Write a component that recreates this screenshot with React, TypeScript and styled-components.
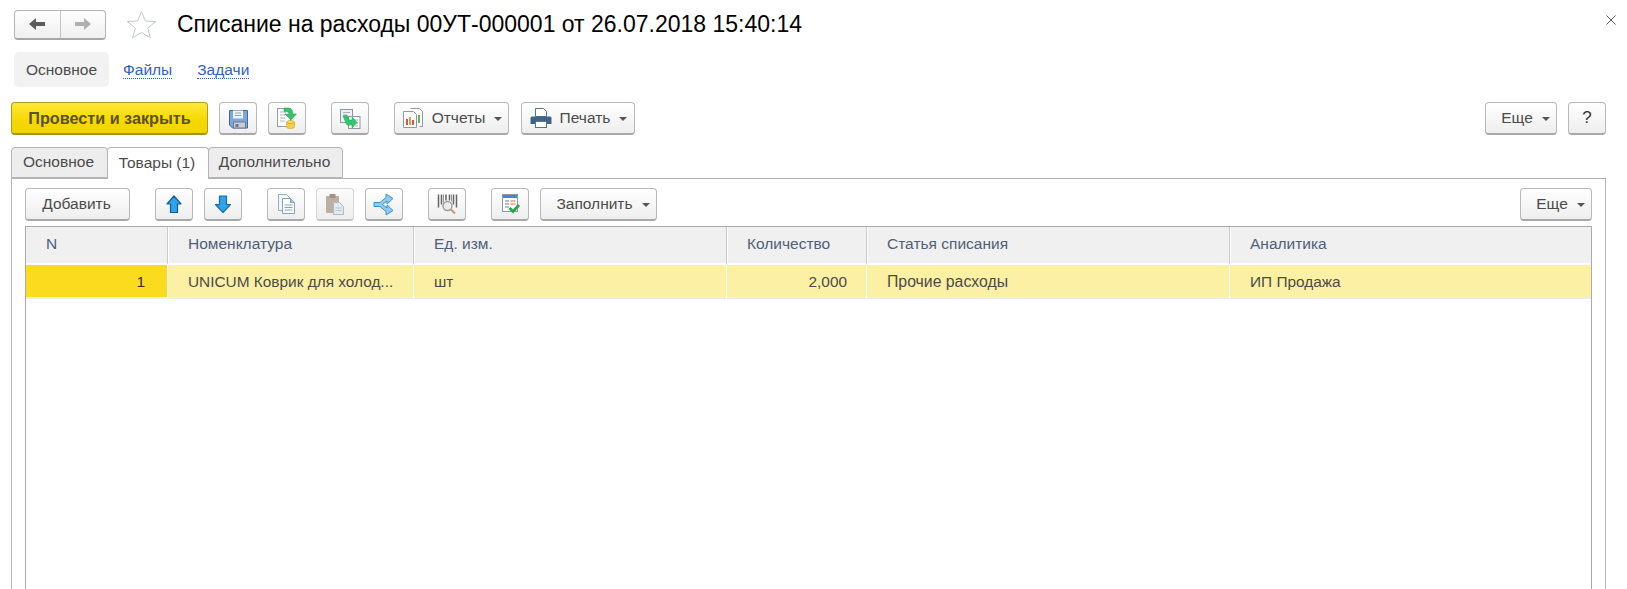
import React from 'react';
import styled, { createGlobalStyle } from 'styled-components';

const Global = createGlobalStyle`
  html, body { margin: 0; padding: 0; background: #fff; }
  body { font-family: "Liberation Sans", Arial, sans-serif; color: #4b4b4b; }
  #root { height: 589px; overflow: hidden; }
`;

const Page = styled.div`
  position: relative;
  width: 1627px;
  height: 589px;
  overflow: hidden;
  background: #fff;
  padding: 9px 21px 0 11px;
  box-sizing: border-box;
`;

const TitleBar = styled.div`
  display: flex;
  align-items: center;
  height: 31px;
  padding-left: 3px;
`;

const NavGroup = styled.div`
  display: flex;
  width: 92px;
  height: 30px;
  box-sizing: border-box;
  border: 1px solid #b4b4b4;
  border-bottom: 2px solid #a6a6a6;
  border-radius: 4px;
  background: linear-gradient(#ffffff, #efefef);
`;

const NavCell = styled.div<{ $divider?: boolean }>`
  flex: 1;
  display: flex;
  align-items: center;
  justify-content: center;
  border-left: ${p => (p.$divider ? '1px solid #c4c4c4' : 'none')};
`;

const StarWrap = styled.div`
  display: flex;
  margin-left: 20px;
`;

const Title = styled.h1`
  margin: -1px 0 0 20px;
  font-size: 23px;
  font-weight: 400;
  color: #000;
  white-space: nowrap;
  line-height: 31px;
`;

const CloseMark = styled.div`
  position: absolute;
  top: 15px;
  right: 11px;
  display: flex;
`;

const SectionBar = styled.div`
  display: flex;
  align-items: center;
  margin: 12px 0 0 3px;
  height: 35px;
`;

const SectionActive = styled.div`
  width: 95px;
  height: 35px;
  display: flex;
  align-items: center;
  justify-content: center;
  background: #f2f2f2;
  border-radius: 5px;
  font-size: 15.5px;
  color: #4b4b4b;
`;

const SectionLink = styled.a<{ $ml: number }>`
  margin-left: ${p => p.$ml}px;
  font-size: 15.5px;
  line-height: 17px;
  color: #2f62bf;
  border-bottom: 1px dotted #2f62bf;
`;

const Toolbar = styled.div<{ $mt?: number }>`
  display: flex;
  align-items: flex-start;
  height: 33px;
  margin-top: ${p => p.$mt ?? 0}px;
`;

const Btn = styled.div<{ $ml?: number; $w?: number; $muted?: boolean }>`
  margin-left: ${p => p.$ml ?? 0}px;
  width: ${p => p.$w ?? 38}px;
  height: 33px;
  box-sizing: border-box;
  flex: none;
  display: flex;
  align-items: center;
  justify-content: center;
  border: 1px solid ${p => (p.$muted ? '#d6d6d6' : '#b9b9b9')};
  border-bottom: 2px solid ${p => (p.$muted ? '#c4c4c4' : '#a8a8a8')};
  border-radius: 4px;
  background: ${p => (p.$muted ? 'linear-gradient(#fbfbfb, #ededed)' : 'linear-gradient(#ffffff, #eeeeee)')};
  font-size: 15.5px;
  color: #4b4b4b;
  white-space: nowrap;
`;

const PrimaryBtn = styled(Btn)`
  border: 1px solid #b39a1e;
  border-bottom: 2px solid #a89020;
  background: linear-gradient(#ffe83a, #f6d800 60%, #f4d400);
  font-size: 16.2px;
  font-weight: 700;
  color: #5a5128;
`;

const HelpBtn = styled(Btn)`
  font-size: 17px;
  color: #333;
`;

const BtnLabel = styled.span<{ $ml?: number }>`
  margin-left: ${p => p.$ml ?? 0}px;
`;

const Caret = styled.span`
  width: 0;
  height: 0;
  margin-left: 9px;
  border-left: 4px solid transparent;
  border-right: 4px solid transparent;
  border-top: 4px solid #555;
  margin-top: 1px;
`;

const Grow = styled.div`
  flex: 1;
`;

const TabStrip = styled.div`
  display: flex;
  height: 32px;
  margin-top: 12px;
  position: relative;
  z-index: 1;
`;

const Tab = styled.div<{ $w: number; $active?: boolean }>`
  width: ${p => p.$w}px;
  height: ${p => (p.$active ? 32 : 31)}px;
  box-sizing: border-box;
  display: flex;
  align-items: center;
  justify-content: center;
  padding: 0 2px 2px 0;
  font-size: 15.5px;
  color: #4b4b4b;
  border: 1px solid #b4b4b4;
  border-bottom: ${p => (p.$active ? 'none' : '1px solid #b4b4b4')};
  margin-left: -1px;
  border-radius: 4px 4px 0 0;
  background: ${p => (p.$active ? '#fff' : '#ededed')};
  &:first-child { margin-left: 0; }
`;

const Panel = styled.div`
  margin-top: -1px;
  height: 420px;
  box-sizing: border-box;
  border: 1px solid #b4b4b4;
  border-bottom: none;
  padding: 9px 13px 0 13px;
`;

const Table = styled.div`
  margin-top: 5px;
  height: 380px;
  box-sizing: border-box;
  border: 1px solid #ababab;
  border-bottom: none;
`;

const Row = styled.div<{ $h: number }>`
  display: grid;
  grid-template-columns: 141px 246px 313px 140px 363px 1fr;
  height: ${p => p.$h}px;
`;

const HeadCell = styled.div`
  display: flex;
  align-items: center;
  padding: 0 0 2px 20px;
  background: #f0f0f0;
  border-left: 1px solid #c9c9c9;
  box-shadow: inset 1px 0 0 #fff;
  border-bottom: 2px solid #fff;
  font-size: 15.5px;
  color: #4f5f78;
  box-sizing: border-box;
  &:first-child { border-left: none; box-shadow: none; padding-left: 20px; }
`;

const Cell = styled.div<{ $right?: boolean; $current?: boolean; $fs?: number; $pr?: number }>`
  display: flex;
  align-items: center;
  justify-content: ${p => (p.$right ? 'flex-end' : 'flex-start')};
  padding: 1px ${p => p.$pr ?? 0}px 0 ${p => (p.$right ? 0 : 20)}px;
  background: ${p => (p.$current ? '#fbdb1e' : '#fcf0a4')};
  color: ${p => (p.$current ? '#2f2f2f' : '#4b4b4b')};
  border-left: ${p => (p.$current ? 'none' : '1px solid #fff')};
  border-bottom: 2px solid #ececec;
  font-size: ${p => p.$fs ?? 15.4}px;
  box-sizing: border-box;
`;

const ico = { width: 24, height: 24, viewBox: '0 0 24 24', fill: 'none' } as const;

const ArrowLeft = () => (
  <svg width="18" height="14" viewBox="0 0 18 14"><path d="M1 7 L8 1 V5 H17 V9 H8 V13 Z" fill="#5c5c5c" /></svg>
);
const ArrowRight = () => (
  <svg width="18" height="14" viewBox="0 0 18 14"><path d="M17 7 L10 1 V5 H1 V9 H10 V13 Z" fill="#b0b0b0" /></svg>
);
const Star = () => (
  <svg width="31" height="29" viewBox="0 0 31 29">
    <path d="M15.5 1.5 L19.4 11 L29.7 11.6 L21.7 18 L24.4 27.8 L15.5 22.4 L6.6 27.8 L9.3 18 L1.3 11.6 L11.6 11 Z" fill="#fff" stroke="#c3c8cf" strokeWidth="1" />
  </svg>
);
const Close = () => (
  <svg width="10" height="10" viewBox="0 0 10 10"><path d="M.5.5 9.5 9.5M9.5.5.5 9.5" stroke="#555" strokeWidth="1" /></svg>
);
const SaveIcon = () => (
  <svg {...ico}>
    <path d="M3.5 4.5 H21.5 V22 H6.5 L3.5 19 Z" fill="#7ea6d8" stroke="#3f6a9c" />
    <rect x="7" y="4.5" width="10" height="8" fill="#eef3fa" />
    <path d="M9 7h6M9 9.500h6" stroke="#8aa6c8" />
    <rect x="7.500" y="16" width="12" height="6" fill="#c9ccd0" stroke="#6d7f94" />
    <rect x="9.500" y="18" width="3" height="3" fill="#667a90" />
  </svg>
);
const DocBase = () => (
  <svg {...ico}>
    <rect x="2.500" y="2.500" width="13" height="18" fill="#fff" stroke="#8d9cae" />
    <path d="M5 6h6M5 9h5M5 12h5M5 15h5" stroke="#a9b4c1" />
    <path d="M9 2 h4 q5 0 5 6 h3.500 l-5.500 6 -6-6 h4 q0-2.500-3-2.500 h-2 z" fill="#35c36e" stroke="#1fa057" strokeWidth=".5" />
    <ellipse cx="15.500" cy="16" rx="4" ry="1.600" fill="#f7dc5b" stroke="#c8a52b" strokeWidth=".6" />
    <path d="M11.500 16v5c0 2 8 2 8 0v-5c0 2-8 2-8 0z" fill="#f3cf43" stroke="#c8a52b" strokeWidth=".6" />
  </svg>
);
const DocLink = () => (
  <svg {...ico}>
    <rect x="2.500" y="3.500" width="12" height="13" fill="#eef1f4" stroke="#8a97a4" />
    <path d="M5 6.500h7M5 9h3" stroke="#a2adb9" />
    <rect x="10.500" y="10.500" width="11.500" height="12" fill="#fff" stroke="#8a97a4" />
    <path d="M15 14h5M17 17h3M17 20h3" stroke="#a2adb9" />
    <path d="M5 10l4-1 2 5h3v-3l5 5.500-5 5.500v-3h-5z" fill="#2fc86d" stroke="#1b9e53" strokeWidth=".5" />
  </svg>
);
const ReportIcon = () => (
  <svg {...ico}>
    <path d="M9.500 2.500h9l3 3v15h-3" fill="#fff" stroke="#8c9aa8" />
    <path d="M2.500 5.500h10l3 3v13h-13z" fill="#fff" stroke="#8c9aa8" />
    <rect x="5" y="13" width="2" height="6" fill="#d9534f" />
    <rect x="8" y="11" width="2" height="8" fill="#e0a238" />
    <rect x="11" y="14" width="2" height="5" fill="#d9534f" />
    <rect x="17" y="9" width="2" height="8" fill="#5fb760" />
  </svg>
);
const PrintIcon = () => (
  <svg {...ico}>
    <path d="M6.500 2.500h8l3 3v5h-11z" fill="#fff" stroke="#56728f" />
    <path d="M3 10.500h18a1.500 1.500 0 0 1 1.500 1.500v6h-21v-6A1.500 1.500 0 0 1 3 10.500z" fill="#3f6488" />
    <rect x="6.500" y="15.500" width="11" height="6" fill="#fff" stroke="#56728f" />
  </svg>
);
const UpIcon = () => (
  <svg {...ico}>
    <path d="M12 4 L19 12 H15.500 V20.500 H8.500 V12 H5 Z" fill="#30a3ea" stroke="#0f5f9b" strokeWidth="1.200" strokeLinejoin="round" />
  </svg>
);
const DownIcon = () => (
  <svg {...ico}>
    <path d="M12 20.500 L19.500 12.500 H15.500 V4 H8.500 V12.500 H4.500 Z" fill="#30a3ea" stroke="#1a6ea8" strokeWidth="1.200" strokeLinejoin="round" />
  </svg>
);
const CopyIcon = () => (
  <svg {...ico}>
    <path d="M4.500 2.500h8l4 4v12h-12z" fill="#f2f6f9" stroke="#8fb1c6" />
    <path d="M8.500 6.500h8l4 4v11h-12z" fill="#fff" stroke="#7fa4bc" />
    <path d="M16.500 6.500v4h4" fill="#a9c6d8" stroke="#7fa4bc" />
    <path d="M10.500 13h8M10.500 15.500h8M10.500 18h8" stroke="#7fa4bc" />
  </svg>
);
const PasteIcon = () => (
  <svg {...ico}>
    <rect x="3" y="4" width="13" height="17" rx="1" fill="#bdaea3" />
    <rect x="6.500" y="2" width="6" height="4" fill="#a29488" />
    <path d="M10.500 10.500h6l4 4v8h-10z" fill="#e4e9ee" stroke="#a9bccb" />
    <path d="M12.500 16h6M12.500 18.500h6" stroke="#b7c7d3" />
  </svg>
);
const BranchIcon = () => (
  <svg {...ico}>
    <path d="M2 10.500 H8 L14 5.500 V2 L21 6.500 15 12 V9 L10.500 12.500 15 16 V13 L21 18.500 14 23 V19.500 L8 14.500 H2 Z" fill="#8fcaf3" stroke="#3b8fc7" strokeWidth="1" strokeLinejoin="round" />
  </svg>
);
const BarcodeIcon = () => (
  <svg {...ico}>
    <path d="M3.500 2.500v13M6.500 2.500v10M11 2.500v6M14.500 2.500v6M18.500 2.500v10M21.500 2.500v13" stroke="#666" strokeWidth="1.500" />
    <path d="M8.500 2.500v8M16.500 2.500v7" stroke="#999" strokeWidth="1" />
    <circle cx="12.500" cy="14" r="4.500" fill="#e6eef5" stroke="#a39a8f" strokeWidth="1.400" />
    <path d="M16 17.500l4 4" stroke="#c69a72" strokeWidth="2.200" />
  </svg>
);
const FillIcon = () => (
  <svg {...ico}>
    <rect x="4.500" y="2.500" width="15" height="17" fill="#fff" stroke="#8a97a4" />
    <rect x="5" y="3" width="14" height="3" fill="#3e88d6" />
    <path d="M7 9h4M7 12h4M7 15h4" stroke="#6f7c8a" />
    <path d="M12.500 9h5M12.500 12h5" stroke="#d9623a" />
    <path d="M11.500 16l3.500 3.500 6-6.500" stroke="#22a84a" strokeWidth="2.800" />
  </svg>
);

const columns = ['N', 'Номенклатура', 'Ед. изм.', 'Количество', 'Статья списания', 'Аналитика'];

export default function App() {
  return (
    <Page>
      <Global />
      <TitleBar>
        <NavGroup>
          <NavCell><ArrowLeft /></NavCell>
          <NavCell $divider><ArrowRight /></NavCell>
        </NavGroup>
        <StarWrap><Star /></StarWrap>
        <Title>Списание на расходы 00УТ-000001 от 26.07.2018 15:40:14</Title>
      </TitleBar>
      <CloseMark><Close /></CloseMark>

      <SectionBar>
        <SectionActive>Основное</SectionActive>
        <SectionLink $ml={14}>Файлы</SectionLink>
        <SectionLink $ml={25}>Задачи</SectionLink>
      </SectionBar>

      <Toolbar $mt={15}>
        <PrimaryBtn $w={197}>Провести и закрыть</PrimaryBtn>
        <Btn $ml={11}><SaveIcon /></Btn>
        <Btn $ml={11}><DocBase /></Btn>
        <Btn $ml={25}><DocLink /></Btn>
        <Btn $ml={25} $w={115}><ReportIcon /><BtnLabel $ml={7}>Отчеты</BtnLabel><Caret /></Btn>
        <Btn $ml={12} $w={114}><PrintIcon /><BtnLabel $ml={7}>Печать</BtnLabel><Caret /></Btn>
        <Grow />
        <Btn $w={72}><BtnLabel $ml={9}>Еще</BtnLabel><Caret /></Btn>
        <HelpBtn $ml={11}>?</HelpBtn>
      </Toolbar>

      <TabStrip>
        <Tab $w={97}>Основное</Tab>
        <Tab $w={102} $active>Товары (1)</Tab>
        <Tab $w={135}>Дополнительно</Tab>
      </TabStrip>

      <Panel>
        <Toolbar>
          <Btn $w={105}><BtnLabel $ml={-2}>Добавить</BtnLabel></Btn>
          <Btn $ml={25}><UpIcon /></Btn>
          <Btn $ml={11}><DownIcon /></Btn>
          <Btn $ml={25}><CopyIcon /></Btn>
          <Btn $ml={11} $muted><PasteIcon /></Btn>
          <Btn $ml={11}><BranchIcon /></Btn>
          <Btn $ml={25}><BarcodeIcon /></Btn>
          <Btn $ml={25}><FillIcon /></Btn>
          <Btn $ml={11} $w={117}><BtnLabel $ml={9}>Заполнить</BtnLabel><Caret /></Btn>
          <Grow />
          <Btn $w={72}><BtnLabel $ml={9}>Еще</BtnLabel><Caret /></Btn>
        </Toolbar>
        <Table>
          <Row $h={38}>
            {columns.map(c => <HeadCell key={c}>{c}</HeadCell>)}
          </Row>
          <Row $h={34}>
            <Cell $right $current $pr={22}>1</Cell>
            <Cell>UNICUM Коврик для холод...</Cell>
            <Cell>шт</Cell>
            <Cell $right $pr={19}>2,000</Cell>
            <Cell $fs={15.8}>Прочие расходы</Cell>
            <Cell>ИП Продажа</Cell>
          </Row>
        </Table>
      </Panel>
    </Page>
  );
}
